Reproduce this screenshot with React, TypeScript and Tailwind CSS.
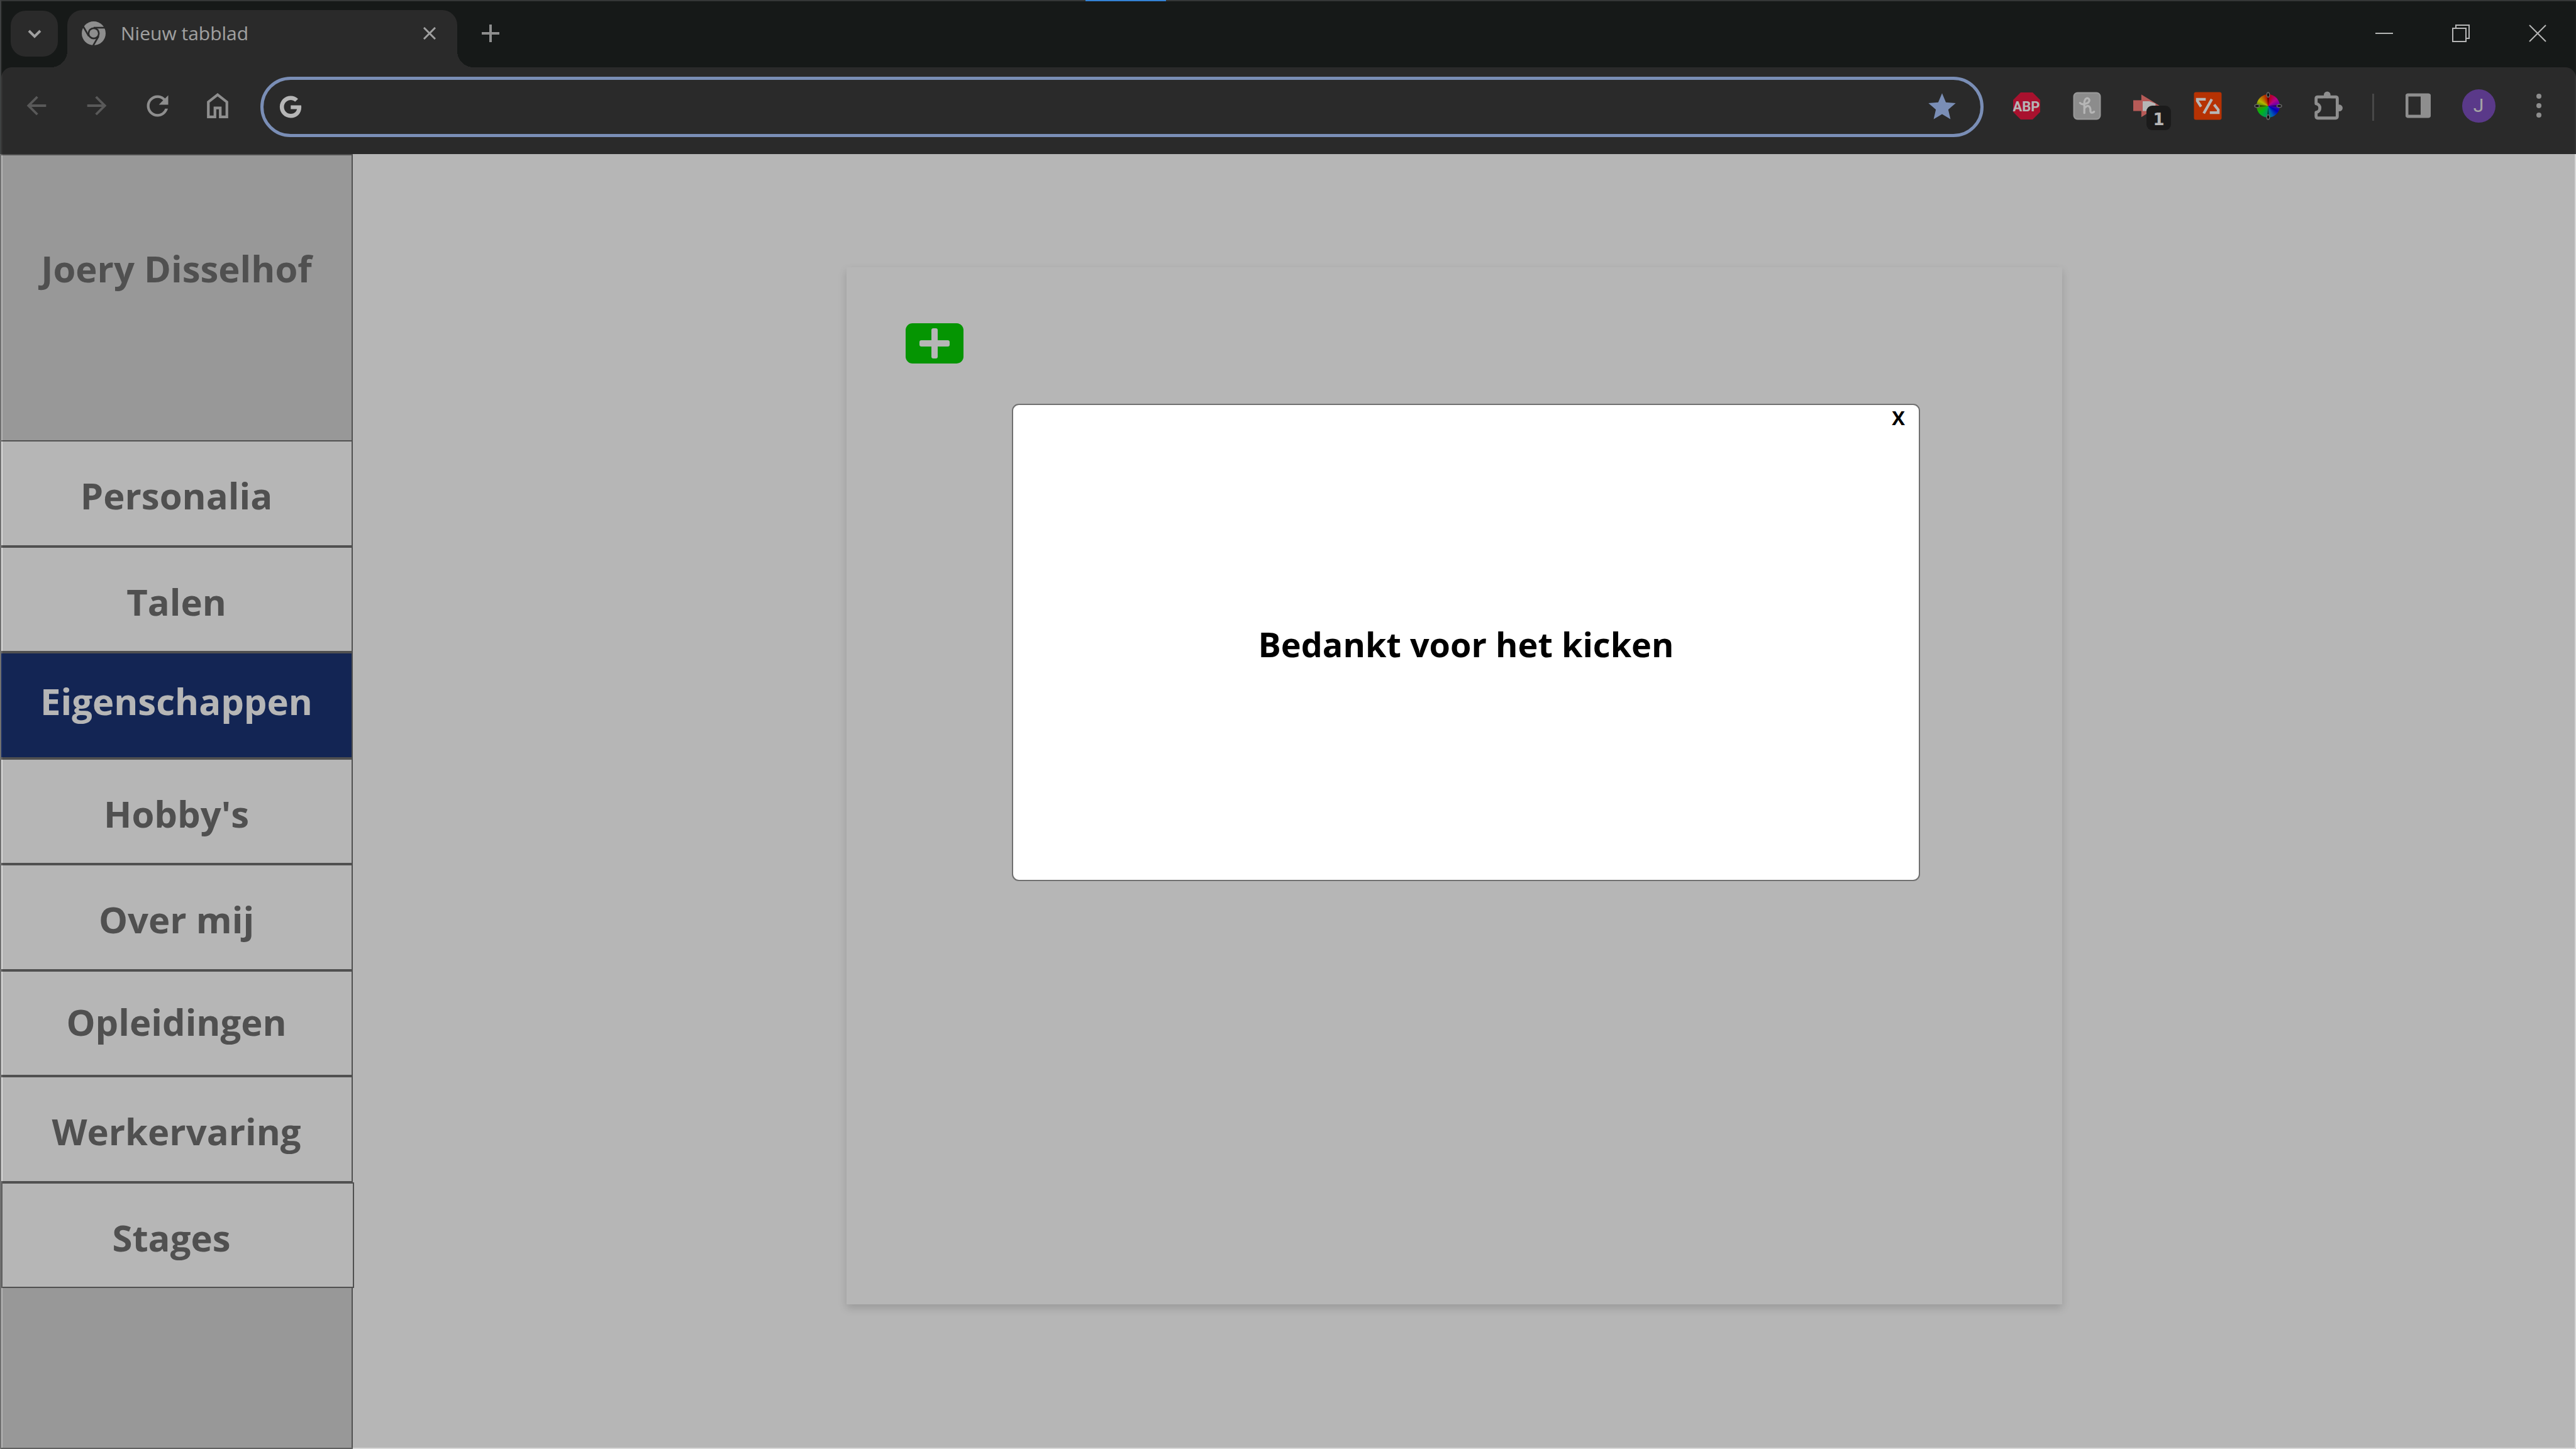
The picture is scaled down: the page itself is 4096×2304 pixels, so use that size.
import React from "react";
import { MdArrowBack, MdArrowForward, MdRefresh, MdStar } from "react-icons/md";
import { FaGoogle } from "react-icons/fa";

const navItems = [
  { label: "Personalia", tone: "pt-2" },
  { label: "Talen", tone: "pt-2" },
  { label: "Eigenschappen", tone: "pb-3 bg-[#1b3476] text-white", current: true },
  { label: "Hobby's", tone: "pt-2" },
  { label: "Over mij", tone: "pt-2" },
  { label: "Opleidingen", tone: "pb-1" },
  { label: "Werkervaring", tone: "pt-2" },
  { label: "Stages", tone: "relative -mr-1 border-x-2 pt-2 pr-5" },
];

function ChromeLogo() {
  return (
    <svg viewBox="0 0 72 72" className="size-[38px] shrink-0" aria-hidden="true">
      <circle cx="36" cy="36" r="36" fill="#c8c8c8" />
      <circle cx="36" cy="36" r="18" fill="#3c3c3c" />
      <g stroke="#3c3c3c" strokeWidth="5">
        <path d="M36 19H72" />
        <path d="M36 19H72" transform="rotate(120 36 36)" />
        <path d="M36 19H72" transform="rotate(240 36 36)" />
      </g>
      <circle cx="36" cy="36" r="13" fill="#c8c8c8" />
    </svg>
  );
}

function HomeIcon() {
  return (
    <svg viewBox="0 0 64 76" className="h-[40px] w-[34px]" fill="none" stroke="#c8c8c8" strokeWidth="8" aria-hidden="true">
      <path d="M4 72V27L32 5L60 27V72H40V45H24V72Z" />
    </svg>
  );
}

function AdblockIcon() {
  return (
    <svg viewBox="0 0 45 45" className="size-[45px]" aria-hidden="true">
      <path d="M13 1H32L44 13V32L32 44H13L1 32V13Z" fill="#ed1941" />
      <text x="22" y="31" textAnchor="middle" className="font-['Roboto',sans-serif] text-[22px] font-bold" fill="#ffffff">
        ABP
      </text>
    </svg>
  );
}

function HoneyIcon() {
  return (
    <svg viewBox="0 0 84 84" className="size-[45px]" fill="none" aria-hidden="true">
      <rect x="3" y="3" width="78" height="78" rx="11" fill="#c4c4c4" stroke="#d6d6d6" strokeWidth="4" />
      <path
        d="M21 33Q27 39 36 36Q50 32 49 24Q46 16 38 21Q33 27 34 38V63M34 49Q43 38 49 44Q53 49 52 57Q54 66 63 59"
        stroke="#ffffff"
        strokeWidth="6"
        strokeLinecap="round"
      />
    </svg>
  );
}

function ArrowIcon() {
  return (
    <svg viewBox="0 0 84 84" className="size-[45px]" aria-hidden="true">
      <path d="M0 25H25V57H0Z" fill="#ff7e7b" />
      <path d="M24 8L78 41L24 75Z" fill="#ff7e7b" />
      <path d="M28 28H48L66 35V57H28Z" fill="#ffffff" />
    </svg>
  );
}

function CodeIcon() {
  return (
    <svg viewBox="0 0 84 84" className="size-[45px]" fill="none" aria-hidden="true">
      <rect x="1" y="1" width="82" height="82" rx="6" fill="#ff4605" />
      <path d="M36 22H11V27L22 44M54 22L30 64M61 38L73 53V62H48" stroke="#ffffff" strokeWidth="8" />
    </svg>
  );
}

function ColorWheelIcon() {
  return (
    <span className="relative flex size-[45px] items-center justify-center">
      <span className="size-[37px] rounded-full bg-[conic-gradient(#f00,#ff00c0_50deg,#6000ff_95deg,#0000ff_120deg,#0080ff_155deg,#00c8a0_180deg,#00ff20_230deg,#70c000_270deg,#ffff00_300deg,#ff8000_330deg,#f00)]" />
      <svg viewBox="0 0 84 84" className="absolute inset-0" aria-hidden="true">
        {["rotate(0 42 42)", "rotate(90 42 42)", "rotate(180 42 42)", "rotate(270 42 42)"].map((turn) => (
          <g key={turn} transform={turn}>
            <path d="M39 14H45L42 38Z" fill="#000000" fillOpacity="0.5" />
            <ellipse cx="42" cy="9" rx="4" ry="7" fill="#000000" stroke="#8c8c8c" strokeWidth="3" />
          </g>
        ))}
      </svg>
    </span>
  );
}

function PuzzleIcon() {
  return (
    <svg viewBox="0 0 84 88" className="h-[47px] w-[45px]" fill="none" aria-hidden="true">
      <path
        d="M5 37V22Q5 17 10 17H63Q68 17 68 22V75Q68 80 63 80H10Q5 80 5 75V63C20 61 20 39 5 37Z"
        stroke="#c8c8c8"
        strokeWidth="9"
        strokeLinejoin="round"
      />
      <circle cx="38" cy="11" r="10" fill="#c8c8c8" />
      <rect x="26" y="22" width="24" height="8" fill="#3c3c3c" />
      <circle cx="74" cy="50" r="10" fill="#c8c8c8" />
      <rect x="55" y="38" width="8" height="24" fill="#3c3c3c" />
    </svg>
  );
}

function SidePanelIcon() {
  return (
    <svg viewBox="0 0 40 40" className="size-[40px]" aria-hidden="true">
      <rect x="2" y="3" width="36" height="34" rx="2" fill="none" stroke="#c8c8c8" strokeWidth="5" />
      <rect x="24" y="3" width="14" height="34" fill="#c8c8c8" />
    </svg>
  );
}

function ToolButton({ label, children }: { label: string; children: React.ReactNode }) {
  return (
    <button type="button" aria-label={label} className="relative flex h-24 w-24 shrink-0 items-center justify-center pb-1">
      {children}
    </button>
  );
}

function WindowButton({ label, d }: { label: string; d: string }) {
  return (
    <button type="button" aria-label={label} className="flex h-full w-[122px] items-center justify-center pb-1">
      <svg viewBox="0 0 28 28" className="size-7" fill="none" stroke="#ffffff" strokeWidth="2" aria-hidden="true">
        <path d={d} />
      </svg>
    </button>
  );
}

function TabStrip() {
  return (
    <div className="flex h-[105px] pl-[15px]">
      <button
        type="button"
        aria-label="Tabbladen zoeken"
        className="mt-[15px] flex h-[73px] w-[75px] items-center justify-center rounded-[24px] bg-[#3c3c3c]"
      >
        <svg viewBox="0 0 22 14" className="h-[14px] w-[22px]" fill="none" stroke="#e0e0e0" strokeWidth="4" aria-hidden="true">
          <path d="M2 2L11 11L20 2" />
        </svg>
      </button>
      <div className="relative ml-[15px] mt-[14px] flex w-[620px] items-center rounded-t-[24px] bg-[#3c3c3c] pb-[17px] pl-[23px] pr-6">
        <span className="absolute -left-[26px] bottom-0 size-[26px] bg-[radial-gradient(circle_at_0_0,transparent_26px,#3c3c3c_26px)]" />
        <span className="absolute -right-[26px] bottom-0 size-[26px] bg-[radial-gradient(circle_at_100%_0,transparent_26px,#3c3c3c_26px)]" />
        <ChromeLogo />
        <span className="ml-6 flex-1 text-[30px] leading-[40px] text-[#e0e0e0]">Nieuw tabblad</span>
        <button type="button" aria-label="Tabblad sluiten" className="flex size-10 items-center justify-center">
          <svg viewBox="0 0 20 20" className="size-5" stroke="#e0e0e0" strokeWidth="3" aria-hidden="true">
            <path d="M1 1L19 19M19 1L1 19" />
          </svg>
        </button>
      </div>
      <button type="button" aria-label="Nieuw tabblad openen" className="ml-[29px] flex w-12 items-center justify-center pb-1">
        <svg viewBox="0 0 28 28" className="size-7" stroke="#c8c8c8" strokeWidth="4" aria-hidden="true">
          <path d="M14 0V28M0 14H28" />
        </svg>
      </button>
      <div className="ml-auto flex h-full">
        <WindowButton label="Minimaliseren" d="M0 14H28" />
        <WindowButton label="Herstellen" d="M1 6H22V27H1ZM6 6V1H27V22H22" />
        <WindowButton label="Sluiten" d="M1 1L27 27M27 1L1 27" />
      </div>
    </div>
  );
}

function Toolbar() {
  return (
    <div className="flex h-[138px] items-center rounded-t-[17px] bg-[#3c3c3c] pb-3 pl-2 pr-[11px]">
      <ToolButton label="Vorige">
        <MdArrowBack className="size-[46px] text-[#7d7d7d]" />
      </ToolButton>
      <ToolButton label="Volgende">
        <MdArrowForward className="size-[46px] text-[#7d7d7d]" />
      </ToolButton>
      <ToolButton label="Vernieuwen">
        <MdRefresh className="size-[51px] text-[#c8c8c8]" />
      </ToolButton>
      <ToolButton label="Startpagina">
        <HomeIcon />
      </ToolButton>
      <div className="mx-5 flex h-24 flex-1 items-center rounded-full border-[5px] border-[#abc8ff] pl-[25px] pr-[35px]">
        <FaGoogle className="size-[36px] text-white" />
        <input aria-label="Adres en zoekbalk" className="ml-6 h-full min-w-0 flex-1 bg-transparent text-[30px] text-white outline-none" />
        <button type="button" aria-label="Bladwijzer bewerken">
          <MdStar className="size-[52px] text-[#abc8ff]" />
        </button>
      </div>
      <ToolButton label="Adblock Plus">
        <AdblockIcon />
      </ToolButton>
      <ToolButton label="Honey">
        <HoneyIcon />
      </ToolButton>
      <ToolButton label="Omleidingen">
        <ArrowIcon />
        <span className="absolute bottom-[11px] right-[10px] flex size-[39px] items-center justify-center rounded-[9px] bg-[#272727] pt-1 font-['DejaVu_Sans',sans-serif] text-[26px] font-bold leading-none text-white">
          1
        </span>
      </ToolButton>
      <ToolButton label="Code">
        <CodeIcon />
      </ToolButton>
      <ToolButton label="Kleurkiezer">
        <ColorWheelIcon />
      </ToolButton>
      <ToolButton label="Extensies">
        <PuzzleIcon />
      </ToolButton>
      <span className="mx-[22px] h-[43px] w-[3px] bg-[#666666]" />
      <ToolButton label="Zijvenster">
        <SidePanelIcon />
      </ToolButton>
      <ToolButton label="Profiel">
        <span className="flex size-[53px] items-center justify-center rounded-full bg-[#7e51c1] font-['Roboto',sans-serif] text-[30px] leading-none text-[#e8e8e8]">
          J
        </span>
      </ToolButton>
      <ToolButton label="Menu">
        <span className="flex flex-col gap-[7px]">
          <span className="size-2 rounded-full bg-[#c8c8c8]" />
          <span className="size-2 rounded-full bg-[#c8c8c8]" />
          <span className="size-2 rounded-full bg-[#c8c8c8]" />
        </span>
      </ToolButton>
    </div>
  );
}

function Sidebar() {
  return (
    <aside className="w-[561px] shrink-0 border-2 border-[#707070] bg-[#d6d6d6] text-[58px] font-bold leading-[80px] text-[#707070]">
      <div className="flex h-[453px] justify-center pt-[140px]">
        <h1>Joery Disselhof</h1>
      </div>
      <nav className="grid h-[1348px] grid-rows-8">
        {navItems.map((item) => (
          <a
            key={item.label}
            href="#"
            aria-current={item.current ? "page" : undefined}
            className={`flex items-center justify-center border-y-2 border-[#707070] ${item.current ? "" : "bg-white"} ${item.tone}`}
          >
            {item.label}
          </a>
        ))}
      </nav>
    </aside>
  );
}

export default function App() {
  return (
    <div className="relative flex h-screen flex-col overflow-hidden bg-white font-['Open_Sans','Noto_Sans',sans-serif]">
      <header className="relative border-l-2 border-t-2 border-[#3f4141] bg-[#202322]">
        <span className="absolute -top-[2px] left-[1724px] h-[2px] w-32 bg-[#3e99f9]" />
        <TabStrip />
        <Toolbar />
      </header>
      <div className="flex flex-1">
        <Sidebar />
        <main className="flex flex-1 pb-[230px] pl-[785px] pr-[817px] pt-[180px]">
          <section className="flex-1 bg-white pl-[94px] pt-[89px] shadow-[0_6px_13px_rgba(0,0,0,0.16)]">
            <button
              type="button"
              aria-label="Eigenschap toevoegen"
              className="flex h-16 w-[92px] items-center justify-center rounded-[11px] bg-[#08d103]"
            >
              <svg viewBox="0 0 48 48" className="size-12" fill="#ffffff" aria-hidden="true">
                <rect x="19" y="0" width="10" height="48" rx="3" />
                <rect x="0" y="19" width="48" height="10" rx="3" />
              </svg>
            </button>
          </section>
        </main>
      </div>

      <div className="absolute inset-0 left-[2px] border-2 border-black/15 bg-black/[0.286] bg-clip-padding" />
      <div className="absolute inset-y-0 left-[566px] right-0 flex items-start justify-center pt-[642px]">
        <div
          role="dialog"
          aria-modal="true"
          aria-labelledby="dialog-title"
          className="relative flex h-[759px] w-[1444px] items-center justify-center rounded-[11px] border-2 border-[#707070] bg-white text-black"
        >
          <h2 id="dialog-title" className="pt-1 text-[54px] font-bold leading-[80px]">
            Bedankt voor het kicken
          </h2>
          <button type="button" aria-label="Sluiten" className="absolute right-[22px] top-0 text-[31px] font-bold leading-10">
            X
          </button>
        </div>
      </div>
    </div>
  );
}
